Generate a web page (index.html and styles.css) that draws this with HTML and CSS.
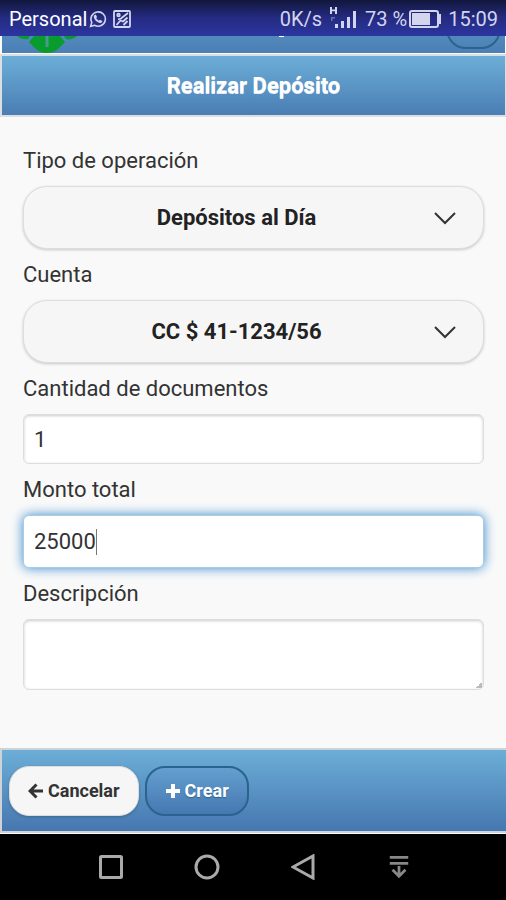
FILE: index.html
```html
<!DOCTYPE html>
<html lang="es">
<head>
<meta charset="utf-8">
<meta name="viewport" content="width=device-width, initial-scale=1">
<title>Realizar Depósito</title>
<link rel="stylesheet" href="styles.css">
</head>
<body>
<div class="status">
  <div class="status-group">
    <span class="carrier">Personal</span>
    <svg class="icon-chat" width="18" height="18" viewBox="0 0 20 20" fill="none" stroke="currentColor" stroke-width="1.8"><path d="M1.8 18.2l1.3-4.4A8 8 0 1 1 6.200 17z"/><path d="M6.200 5.600l1.400-.5 1.300 2.700-.9 1.200c.7 1.300 1.600 2.200 3 2.900l1.200-1 2.600 1.300c0 1.700-1.500 2.400-2.900 2.200C8.500 13.800 5.300 10.300 5.300 7.300c0-.7.3-1.300.9-1.700z" fill="currentColor" stroke="none"/></svg>
    <svg class="icon-photo" width="18" height="18" viewBox="0 0 18 18" fill="none" stroke="currentColor" stroke-width="1.800"><rect x="1" y="1" width="16" height="16" rx="1"/><path d="M5 9.500l3-1 7-5.500M3.500 15l4-4.500 2.500 1 4.500-4M10.500 15l4-4"/><circle cx="5.500" cy="5" r="1.300"/></svg>
  </div>
  <div class="status-group">
    <span class="speed">0K/s</span>
    <svg class="icon-signal" width="27" height="24" viewBox="0 0 27 24" fill="currentColor"><path d="M0 0h2v2.500h3V0h2v7H5V4.200H2V7H0z"/><rect x="5" y="17" width="3" height="4"/><rect x="11" y="14" width="3" height="7"/><rect x="17" y="10" width="3" height="11"/><rect x="23" y="4" width="3" height="17"/><path d="M1 10h4v1.500H2.500V14H1z" opacity=".4"/></svg>
    <span>73 %</span>
    <svg class="icon-battery" width="33" height="18" viewBox="0 0 33 18"><rect x="1" y="1" width="28" height="16" rx="2" fill="none" stroke="currentColor" stroke-width="2"/><rect x="3" y="3" width="18" height="12" fill="currentColor"/><path d="M30 4h2v10h-2z" fill="currentColor"/></svg>
    <span class="clock">15:09</span>
  </div>
</div>

<div class="topbar">
  <svg class="logo" width="60" height="17" viewBox="0 0 60 17"><path fill="#079c2d" d="M0 0h13l-2 3C7 4 2 2 0 0zM47 0h13c-3 3-8 4-11 3zM17 0h26l5 6c-6 6-9 11-18 11S18 12 12 6z"/><path d="M30 0v11" stroke="#4a9a91" stroke-width="3"/></svg>
  <span class="topbar-mark"></span>
  <span class="topbar-pill"></span>
</div>
<header class="title"><h1>Realizar Depósito</h1></header>

<form class="page">
  <main class="fields">
    <label for="tipo">Tipo de operación</label>
    <div class="select-wrap">
      <select id="tipo"><option>Depósitos al Día</option></select>
      <svg class="chevron" width="22" height="14" viewBox="0 0 22 14" fill="none" stroke="currentColor" stroke-width="2"><path d="M1 2l10 10L21 2"/></svg>
    </div>
    <label for="cuenta">Cuenta</label>
    <div class="select-wrap">
      <select id="cuenta"><option>CC $ 41-1234/56</option></select>
      <svg class="chevron" width="22" height="14" viewBox="0 0 22 14" fill="none" stroke="currentColor" stroke-width="2"><path d="M1 2l10 10L21 2"/></svg>
    </div>
    <label for="cantidad">Cantidad de documentos</label>
    <input id="cantidad" class="field" type="text" inputmode="numeric" value="1">
    <label for="monto">Monto total</label>
    <div class="amount">
      <input id="monto" class="field active" type="text" inputmode="numeric" value="25000">
      <span class="caret"></span>
    </div>
    <label for="descripcion">Descripción</label>
    <div class="note">
      <textarea id="descripcion" class="field"></textarea>
      <span class="grip"></span>
    </div>
  </main>
  <footer class="actions">
    <button type="button" class="btn btn-light"><svg width="16" height="16" viewBox="0 0 16 16" fill="none" stroke="currentColor" stroke-width="3"><path d="M15 8H2M8.500 1.500L2 8l6.500 6.500"/></svg>Cancelar</button>
    <button type="submit" class="btn btn-blue"><svg width="16" height="16" viewBox="0 0 16 16" stroke="currentColor" stroke-width="4"><path d="M8 1v14M1 8h14"/></svg>Crear</button>
  </footer>
</form>

<nav class="navbar">
  <button type="button" aria-label="Recientes"><svg width="26" height="26" viewBox="0 0 26 26"><rect x="2.500" y="2.500" width="21" height="21" rx="1"/></svg></button>
  <button type="button" aria-label="Inicio"><svg width="26" height="26" viewBox="0 0 26 26"><circle cx="13" cy="13" r="11"/></svg></button>
  <button type="button" aria-label="Atrás"><svg width="26" height="26" viewBox="0 0 26 26"><path d="M22 2v22L2 13z"/></svg></button>
  <button type="button" class="dim" aria-label="Ocultar barra"><svg width="26" height="26" viewBox="0 0 26 26"><path d="M3 2.500h20M3 9h20M13 12v11M6 16l7 7 7-7"/></svg></button>
</nav>
</body>
</html>
```
FILE: styles.css
```css
* { box-sizing: border-box; }

body {
  margin: 0;
  min-height: 100vh;
  display: flex;
  flex-direction: column;
  background: #f9f9f9;
  color: #333;
  font-family: Roboto, "Liberation Sans", sans-serif;
  font-size: 22px;
}

button, input, select, textarea { font: inherit; color: inherit; margin: 0; }
svg { display: block; flex: none; }

.status {
  height: 36px;
  padding: 2px 8px 0 9px;
  display: flex;
  justify-content: space-between;
  align-items: center;
  background: linear-gradient(#11173b, #252b82 50%, #2b369f);
  color: #d3d5ef;
  font-size: 20px;
  white-space: nowrap;
}
.status-group { display: flex; align-items: center; gap: 6px; }
.status-group:first-child { gap: 2px; }
.carrier { color: #fff; }
.icon-photo { margin-left: 4px; }
.icon-signal { margin: 0 2px; align-self: flex-start; }
.icon-battery { margin-left: -4px; }

.topbar {
  height: 17px;
  margin: 0 1px 0 2px;
  padding: 0 4px 0 15px;
  display: flex;
  align-items: flex-start;
  justify-content: space-between;
  overflow: hidden;
  background: linear-gradient(#5289bd, #4b7fb5);
}
.topbar-mark { width: 5px; height: 1px; margin-left: 39px; background: #fff; }
.topbar-pill {
  width: 55px;
  height: 40px;
  margin-top: -27px;
  border: 2px solid #28648c;
  border-radius: 20px;
}

.title {
  margin: 3px 1px 0 2px;
  height: 59px;
  display: flex;
  align-items: center;
  justify-content: center;
  background: linear-gradient(#6caed7, #4a7db4);
  box-shadow: 0 0 0 2px #dadfe2;
  color: #fff;
}
.title h1 { margin: 0; font-size: 22px; font-weight: 700; text-shadow: 0 1px 0 #e4edf5; }

.page { flex: 1; display: flex; flex-direction: column; }
.fields {
  flex: 1;
  padding: 20px 22px 24px 23px;
  display: flex;
  flex-direction: column;
}
.fields label { line-height: 51px; }

.select-wrap, .amount, .note { position: relative; display: flex; }
.select-wrap select {
  appearance: none;
  width: 100%;
  height: 63px;
  padding: 0 60px 0 26px;
  border: 1px solid #ddd;
  border-radius: 24px;
  background: #f6f6f6;
  box-shadow: 0 1px 3px rgba(0, 0, 0, .2);
  color: #222;
  font-weight: 700;
  text-align: center;
  text-align-last: center;
}
.chevron { position: absolute; right: 28px; top: 25px; pointer-events: none; }

.field {
  width: 100%;
  height: 50px;
  padding: 0 10px;
  border: 1px solid #ddd;
  border-radius: 6px;
  background: #fff;
  box-shadow: inset 0 1px 3px rgba(0, 0, 0, .2);
  outline: none;
}
.field.active {
  height: 53px;
  border-color: #a9cbe4;
  box-shadow: 0 0 12px #3388cc;
  caret-color: transparent;
}
.caret {
  position: absolute;
  left: 73px;
  top: 14px;
  width: 1px;
  height: 26px;
  background: #777;
}
textarea.field { height: 71px; padding: 10px; resize: none; }
.grip {
  position: absolute;
  right: 2px;
  bottom: 2px;
  width: 6px;
  height: 6px;
  background: linear-gradient(135deg, transparent 50%, #bbb 50%);
}

.actions {
  height: 81px;
  margin: 0 0 3px 2px;
  padding: 0 7px;
  display: flex;
  align-items: center;
  gap: 6px;
  background: linear-gradient(#6caed7, #4677b0);
  box-shadow: 0 0 0 2px #ced3d7;
}
.btn {
  height: 50px;
  padding: 0 18px;
  display: flex;
  align-items: center;
  gap: 4px;
  border-radius: 20px;
  font-size: 18px;
  font-weight: 700;
}
.btn-light {
  border: 1px solid #ddd;
  background: #f6f6f6;
  box-shadow: 0 1px 3px rgba(0, 0, 0, .2);
}
.btn-blue {
  border: 2px solid #28648c;
  background: linear-gradient(#649fd0, #4578b1);
  color: #fff;
  text-shadow: 0 1px 1px #28648c;
}

.navbar {
  position: relative;
  height: 66px;
  padding: 0 60px 0 63px;
  display: flex;
  align-items: center;
  justify-content: space-between;
  background: #000;
}
.navbar button {
  padding: 0 35px;
  border: 0;
  background: none;
  color: #aaa;
}
.navbar button.dim { color: #888; }
.navbar svg { fill: none; stroke: currentColor; stroke-width: 3; }
.navbar .dim svg { width: 24px; height: 26px; }
```
